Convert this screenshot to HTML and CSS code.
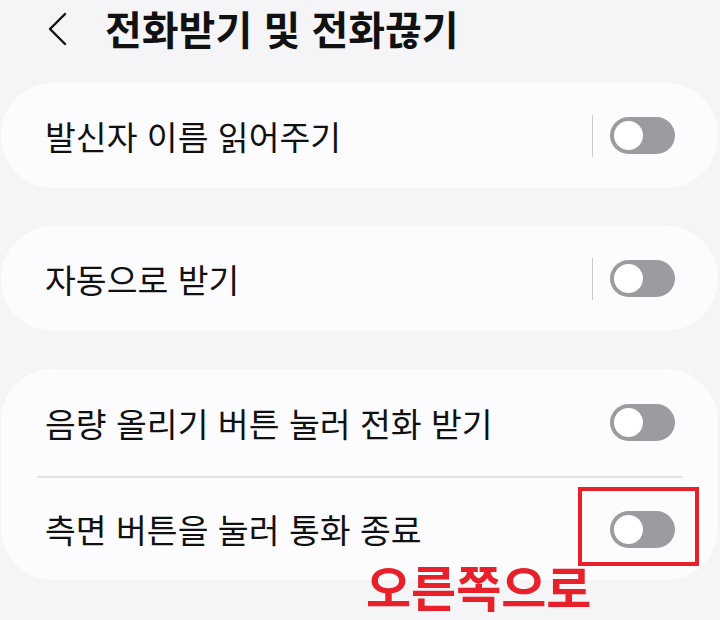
FILE: index.html
```html
<!DOCTYPE html>
<html lang="ko">
<head>
<meta charset="utf-8">
<link rel="stylesheet" href="styles.css">
</head>
<body>
<div class="page">
  <header class="header">
    <svg class="back" width="24" height="36" viewBox="0 0 24 36">
      <path d="M19 4 L4 19 L19 34" fill="none" stroke="#111" stroke-width="2.4" stroke-linecap="round" stroke-linejoin="round"/>
    </svg>
    <h1 class="title">전화받기 및 전화끊기</h1>
  </header>

  <section class="card">
    <div class="row">
      <span class="label">발신자 이름 읽어주기</span>
      <span class="vline"></span>
      <span class="toggle"><span class="knob"></span></span>
    </div>
  </section>

  <section class="card">
    <div class="row">
      <span class="label">자동으로 받기</span>
      <span class="vline"></span>
      <span class="toggle"><span class="knob"></span></span>
    </div>
  </section>

  <section class="card">
    <div class="row row-top">
      <span class="label">음량 올리기 버튼 눌러 전화 받기</span>
      <span class="toggle"><span class="knob"></span></span>
    </div>
    <div class="divider"></div>
    <div class="row row-bottom">
      <span class="label">측면 버튼을 눌러 통화 종료</span>
      <span class="toggle"><span class="knob"></span></span>
    </div>
  </section>

  <div class="mark-box"></div>
  <div class="mark-text">오른쪽으로</div>
</div>
</body>
</html>
```

FILE: styles.css
```css
html, body {
  margin: 0;
  padding: 0;
}
body {
  background: #f5f5f7;
  font-family: "Noto Sans CJK KR", "Noto Sans", sans-serif;
  color: #111;
  width: 720px;
  height: 620px;
  overflow: hidden;
}
.page {
  position: relative;
  width: 720px;
  height: 620px;
}
.header {
  display: flex;
  align-items: center;
  height: 56px;
  margin-bottom: 27px;
}
.back {
  margin-left: 46px;
  margin-right: 35px;
}
.title {
  margin: 0;
  font-size: 40px;
  font-weight: 700;
  letter-spacing: 0;
  line-height: 1;
}
.card {
  background: #fcfcfe;
  border-radius: 52px;
  margin: 0 2px 38px 1px;
}
.row {
  display: flex;
  align-items: center;
  height: 105px;
  padding: 0 43px 0 44px;
}
.row-top {
  height: 107px;
}
.row-bottom {
  height: 102px;
}
.label {
  flex: 1;
  font-size: 33.5px;
  line-height: 1;
  letter-spacing: 0;
}
.vline {
  width: 1px;
  height: 42px;
  background: #c9c9cc;
  margin-right: 17px;
}
.toggle {
  position: relative;
  width: 65px;
  height: 37px;
  border-radius: 19px;
  background: #9c9ca0;
}
.knob {
  position: absolute;
  left: 4px;
  top: 4px;
  width: 29px;
  height: 29px;
  border-radius: 50%;
  background: #fff;
}
.divider {
  height: 2px;
  background: #e3e3e5;
  margin: 0 35px 0 36px;
}
.mark-box {
  position: absolute;
  left: 578px;
  top: 487px;
  width: 113px;
  height: 71px;
  border: 4.5px solid #e8202a;
}
.mark-text {
  position: absolute;
  left: 366px;
  top: 561px;
  font-size: 49px;
  font-weight: 700;
  line-height: 1;
  color: #e8202a;
  letter-spacing: 0;
}
```
